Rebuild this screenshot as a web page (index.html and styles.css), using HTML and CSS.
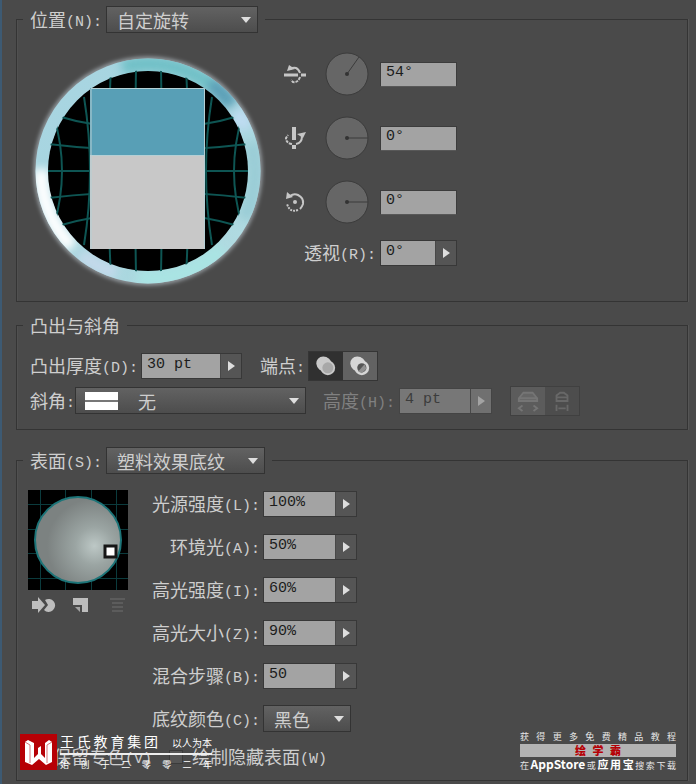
FILE: index.html
```html
<!DOCTYPE html>
<html lang="zh-CN">
<head>
<meta charset="utf-8">
<meta name="viewport" content="width=device-width, initial-scale=1">
<title>3D 凸出和斜角选项</title>
<link rel="stylesheet" href="styles.css">
</head>
<body>
<main class="dialog">

  <fieldset class="group group-position">
    <legend class="group-title">
      <label for="position">位置<span class="latin">(N):</span></label>
      <span class="dropdown dropdown-position"><select id="position"><option>自定旋转</option></select></span>
    </legend>
    <div class="rotation">
      <svg class="trackball" viewBox="0 0 236 236" aria-hidden="true">
        <defs>
          <linearGradient id="ring" x1="0" y1="0" x2="1" y2="1">
            <stop offset="0" stop-color="#a9d5e2"/>
            <stop offset=".5" stop-color="#a5d5de"/>
            <stop offset="1" stop-color="#b4dce2"/>
          </linearGradient>
          <filter id="soft" x="-10%" y="-10%" width="120%" height="120%"><feGaussianBlur stdDeviation="2"/></filter>
          <filter id="softer" x="-30%" y="-30%" width="160%" height="160%"><feGaussianBlur stdDeviation="5"/></filter>
          <clipPath id="ball"><circle cx="118" cy="118" r="101"/></clipPath>
          <mask id="band"><circle cx="118" cy="118" r="106" fill="none" stroke="#fff" stroke-width="13"/></mask>
        </defs>
        <circle cx="118" cy="118" r="112" fill="none" stroke="#a6aeb4" stroke-width="4" filter="url(#soft)"/>
        <circle cx="118" cy="118" r="106" fill="none" stroke="url(#ring)" stroke-width="13"/>
        <g mask="url(#band)" fill="none" stroke-width="16">
          <g filter="url(#softer)">
            <path d="M92 14A107 107 0 0 1 182 32" stroke="#6fc0c6"/>
            <path d="M180 30A107 107 0 0 1 202 52" stroke="#5a9fb6"/>
            <path d="M206 58A107 107 0 0 1 216 76" stroke="#bfdcf2"/>
            <path d="M11 116A107 107 0 0 0 42 194" stroke="#ffffff"/>
            <path d="M50 201A107 107 0 0 0 86 220" stroke="#c3d9ea"/>
            <path d="M108 225A107 107 0 0 0 192 196" stroke="#a9e4e3"/>
            <path d="M221 90A107 107 0 0 1 214 166" stroke="#9accd5"/>
          </g>
        </g>
        <circle cx="118" cy="118" r="100" fill="#000"/>
        <g clip-path="url(#ball)" fill="none" stroke="#0e5553" stroke-width="2">
          <path d="M18 118H218M18 91Q118 103 218 91M18 145Q118 133 218 145M20 61Q118 91 216 61M20 175Q118 145 216 175"/>
          <path d="M106 16Q104 118 106 220M131 16Q133 118 131 220M81 14Q75 118 81 222M156 14Q162 118 156 222M54 44Q66 118 54 192M182 44Q170 118 182 192M24 64Q40 118 24 172M212 64Q196 118 212 172"/>
        </g>
        <rect x="60" y="35" width="115" height="67" fill="#589fb6"/>
        <rect x="60" y="102" width="115" height="94" fill="#c8c8c8"/>
        <path d="M61 196V35.500H174.500V196M61 102.500H174" fill="none" stroke="#b5cfd4"/>
      </svg>
      <div class="axes">
        <div class="axis">
          <svg class="axis-icon" viewBox="0 0 24 24" aria-hidden="true"><g fill="none" stroke="#c6c6c6"><path d="M1 13h14M18 13h5" stroke-width="3"/><path d="M7 7q7-4 10 4" stroke-width="2"/><path d="M17 15q-2 6-7 5l-2-2" stroke-width="2" stroke-dasharray="3 1"/></g><path d="M4 9l2-6 6 4z" fill="#c6c6c6"/></svg>
          <svg class="dial" viewBox="0 0 46 46" aria-hidden="true"><circle cx="23" cy="23" r="21"/><path d="M23 23L35 6"/><circle class="hub" cx="23" cy="23" r="2"/></svg>
          <input class="field" type="text" value="54°" aria-label="绕 X 轴旋转">
        </div>
        <div class="axis">
          <svg class="axis-icon" viewBox="0 0 24 24" aria-hidden="true"><g fill="none" stroke="#c6c6c6"><path d="M11 1v13M11 19v4" stroke-width="4"/><path d="M9 18q-6-1-6-6l2-3" stroke-width="2" stroke-dasharray="3 1"/><path d="M13 18q6-1 6-8" stroke-width="2"/></g><path d="M14 8l9-2-3 6z" fill="#c6c6c6"/></svg>
          <svg class="dial" viewBox="0 0 46 46" aria-hidden="true"><circle cx="23" cy="23" r="21"/><path d="M23 23H44"/><circle class="hub" cx="23" cy="23" r="2"/></svg>
          <input class="field" type="text" value="0°" aria-label="绕 Y 轴旋转">
        </div>
        <div class="axis">
          <svg class="axis-icon" viewBox="0 0 24 24" aria-hidden="true"><g fill="none" stroke="#c6c6c6" stroke-width="2"><path d="M7 6q4-3 8-1 6 3 5 9-1 3-3 5"/><path d="M15 20q-8 3-11-6" stroke-dasharray="2 1"/></g><path d="M3 9l1-7 6 5z" fill="#c6c6c6"/><circle cx="12" cy="12" r="2" fill="#c6c6c6"/></svg>
          <svg class="dial" viewBox="0 0 46 46" aria-hidden="true"><circle cx="23" cy="23" r="21"/><path d="M23 23H44"/><circle class="hub" cx="23" cy="23" r="2"/></svg>
          <input class="field" type="text" value="0°" aria-label="绕 Z 轴旋转">
        </div>
        <div class="perspective">
          <label for="perspective">透视<span class="latin">(R):</span></label>
          <span class="stepper"><input class="field" id="perspective" type="text" value="0°"><button class="step" type="button" aria-label="透视滑块"></button></span>
        </div>
      </div>
    </div>
  </fieldset>

  <fieldset class="group group-extrude">
    <legend class="group-title">凸出与斜角</legend>
    <div class="row">
      <label for="depth">凸出厚度<span class="latin">(D):</span></label>
      <span class="stepper stepper-depth"><input class="field" id="depth" type="text" value="30 pt"><button class="step" type="button" aria-label="凸出厚度滑块"></button></span>
      <span class="cap-label">端点<span class="latin">:</span></span>
      <span class="toggle">
        <button class="toggle-item is-on" type="button" aria-label="开启端点"><svg viewBox="0 0 24 24" aria-hidden="true"><ellipse cx="10" cy="10" rx="9" ry="8" transform="rotate(42 10 10)" fill="#c9c9c9"/><circle cx="14" cy="14" r="8" fill="#c9c9c9"/><circle cx="14" cy="14" r="6" fill="#a8a8a8"/></svg></button>
        <button class="toggle-item" type="button" aria-label="关闭端点"><svg viewBox="0 0 24 24" aria-hidden="true"><ellipse cx="10" cy="10" rx="9" ry="8" transform="rotate(42 10 10)" fill="#d6d6d6"/><circle cx="14" cy="14" r="8" fill="#d6d6d6"/><circle cx="14" cy="14" r="5" fill="#555"/><path d="M10 18l7-8 2 5-5 5z" fill="#919191"/></svg></button>
      </span>
    </div>
    <div class="row">
      <label for="bevel">斜角<span class="latin">:</span></label>
      <span class="dropdown dropdown-bevel"><select id="bevel"><option>无</option></select><span class="swatch"></span></span>
      <label class="dim height-label" for="height">高度<span class="latin">(H):</span></label>
      <span class="stepper stepper-height is-off"><input class="field" id="height" type="text" value="4 pt" disabled><button class="step" type="button" disabled aria-label="高度滑块"></button></span>
      <span class="toggle toggle-bevel">
        <button class="toggle-item" type="button" disabled aria-label="斜角外扩"><svg viewBox="0 0 24 24" aria-hidden="true"><g fill="#666" stroke="#757575" stroke-width="2"><path d="M2 12V9l5-6h10l5 6v3zM3 9h18"/><path d="M6 17l-4 3 4 3M18 17l4 3-4 3" fill="none"/></g></svg></button>
        <button class="toggle-item" type="button" disabled aria-label="斜角内缩"><svg viewBox="0 0 24 24" aria-hidden="true"><g fill="none" stroke="#686868" stroke-width="2"><path d="M6 12V6l4-3h4l4 3v6zM6 8h12"/><path d="M6 16v7M18 16v7M8 20h8"/></g></svg></button>
      </span>
    </div>
  </fieldset>

  <fieldset class="group group-surface">
    <legend class="group-title">
      <label for="surface">表面<span class="latin">(S):</span></label>
      <span class="dropdown dropdown-surface"><select id="surface"><option>塑料效果底纹</option></select></span>
    </legend>
    <div class="surface">
      <div class="lighting">
        <svg class="sphere" viewBox="0 0 100 100" aria-hidden="true">
          <defs>
            <radialGradient id="shade" cx=".69" cy=".57" r=".55">
              <stop offset="0" stop-color="#bdc8c6"/>
              <stop offset=".4" stop-color="#9ba5a3"/>
              <stop offset="1" stop-color="#7c8281"/>
            </radialGradient>
          </defs>
          <rect width="100" height="100" fill="#000"/>
          <path d="M12.500 0v100M37.500 0v100M63.500 0v100M88.500 0v100M0 14.500h100M0 39.500h100M0 63.500h100M0 88.500h100" stroke="#0b3b3d"/>
          <circle cx="50" cy="50" r="43" fill="url(#shade)" stroke="#1c7478" stroke-width="2"/>
          <rect x="77" y="56" width="11" height="11" fill="#fff" stroke="#161616" stroke-width="3"/>
        </svg>
        <div class="light-tools">
          <button type="button" aria-label="将所选光源移到对象后面"><svg viewBox="0 0 24 18" aria-hidden="true"><path d="M0 5h6V1l7 8-7 8v-4H0z" fill="#bdbdbd"/><path d="M13 4a6.500 6.500 0 1 1-1 10l4-5z" fill="#bdbdbd"/></svg></button>
          <button type="button" aria-label="新建光源"><svg viewBox="0 0 24 18" aria-hidden="true"><path d="M4 2h15v14h-6V9H4z" fill="#bdbdbd"/><path d="M6 11h5v5z" fill="#a3a3a3"/></svg></button>
          <button type="button" disabled aria-label="删除光源"><svg viewBox="0 0 24 18" aria-hidden="true"><path d="M4 3h15M6 7h11M6 11h11M6 15h11" stroke="#5c5c5c" stroke-width="2"/></svg></button>
        </div>
      </div>
      <div class="settings">
        <label for="intensity">光源强度<span class="latin">(L):</span></label>
        <span class="stepper"><input class="field" id="intensity" type="text" value="100%"><button class="step" type="button" aria-label="光源强度滑块"></button></span>
        <label for="ambient">环境光<span class="latin">(A):</span></label>
        <span class="stepper"><input class="field" id="ambient" type="text" value="50%"><button class="step" type="button" aria-label="环境光滑块"></button></span>
        <label for="highlight">高光强度<span class="latin">(I):</span></label>
        <span class="stepper"><input class="field" id="highlight" type="text" value="60%"><button class="step" type="button" aria-label="高光强度滑块"></button></span>
        <label for="size">高光大小<span class="latin">(Z):</span></label>
        <span class="stepper"><input class="field" id="size" type="text" value="90%"><button class="step" type="button" aria-label="高光大小滑块"></button></span>
        <label for="blend">混合步骤<span class="latin">(B):</span></label>
        <span class="stepper"><input class="field" id="blend" type="text" value="50"><button class="step" type="button" aria-label="混合步骤滑块"></button></span>
        <label for="shading">底纹颜色<span class="latin">(C):</span></label>
        <span class="dropdown dropdown-shading"><select id="shading"><option>黑色</option></select></span>
      </div>
    </div>
    <div class="checks">
      <label class="check"><input type="checkbox"><span>保留专色<span class="latin">(V)</span></span></label>
      <label class="check"><input type="checkbox"><span>绘制隐藏表面<span class="latin">(W)</span></span></label>
    </div>
  </fieldset>

  <div class="brand">
    <svg class="brand-logo" viewBox="0 0 37 36" aria-hidden="true">
      <rect width="37" height="36" fill="#b60005"/>
      <path d="M5 8l3-2 6 3v15l4-4v-6l3-2v8l4 4V9l4-3 3 2v20l-6 3-7-6-7 6-7-3z" fill="#fff"/>
      <path d="M5 8l5 3v18M32 8l-5 3v18" fill="none" stroke="#d8777a"/>
    </svg>
    <div class="brand-text">
      <div class="brand-head"><span class="brand-name">王氏教育集团</span><span class="brand-motto">以人为本</span></div>
      <div class="brand-since">始创于二零零二年</div>
    </div>
  </div>

  <div class="promo">
    <div class="promo-line">获得更多免费精品教程</div>
    <div class="promo-band">绘学霸</div>
    <div class="promo-line promo-stores">在<b class="store">AppStore</b>或<b>应用宝</b>搜索下载</div>
  </div>
</main>
</body>
</html>
```
FILE: styles.css
```css
* { box-sizing: border-box; }

body {
  margin: 0;
  background: #4a4a4a;
  color: #cecece;
  font: 18px/26px "Noto Sans CJK SC", sans-serif;
}

button, input, select { font: inherit; color: inherit; margin: 0; }
svg { display: block; }

.latin {
  font-family: "Liberation Mono", monospace;
  font-size: 15px;
  line-height: 20px;
  vertical-align: 1px;
}

.dialog {
  position: relative;
  min-height: 100vh;
  padding: 6px 8px 3px 14px;
  border-left: 2px solid #3d5a73;
  overflow: hidden;
}

/* Groups */
.group {
  min-width: 0;
  margin: 0;
  padding: 0 13px;
  border: 1px solid #343434;
  box-shadow: 1px 0 #555, inset 1px 0 #505050;
}
.group-position { padding-bottom: 12px; }
.group-extrude { margin-top: 10px; padding-bottom: 11px; }
.group-surface { margin-top: 17px; padding-bottom: 10px; }

.group-title {
  display: flex;
  gap: 4px;
  margin-left: -7px;
  padding: 0 7px;
}

/* Drop-downs */
.dropdown {
  position: relative;
  display: inline-flex;
  height: 27px;
}
.dropdown::after {
  content: "";
  position: absolute;
  right: 7px;
  top: 11px;
  border: 5px solid transparent;
  border-top: 6px solid #dedede;
  border-bottom: 0;
  pointer-events: none;
}
.dropdown select {
  appearance: none;
  width: 100%;
  padding: 0 20px 0 10px;
  border: 1px solid #333;
  border-radius: 0;
  background: linear-gradient(#626262, #4d4d4d);
}
.dropdown-position { width: 152px; }
.dropdown-surface { width: 159px; }
.dropdown-bevel { width: 231px; }
.dropdown-bevel select { padding-left: 62px; }
.dropdown-shading { width: 88px; }

.swatch {
  position: absolute;
  left: 10px;
  top: 5px;
  width: 33px;
  height: 18px;
  background: linear-gradient(#fff 8px, #777 8px 10px, #fff 10px);
  pointer-events: none;
}

/* Fields */
.field {
  width: 77px;
  height: 25px;
  padding: 0 4px 3px 5px;
  border: 1px solid #3c3c3c;
  border-bottom-color: #585858;
  border-radius: 0;
  background: #a3a3a3;
  color: #1c1c1c;
  font-family: "Liberation Mono", monospace;
  font-size: 15px;
}
.stepper {
  display: inline-flex;
  width: 94px;
  height: 26px;
  border: 1px solid #383838;
}
.stepper .field {
  flex: 1;
  min-width: 0;
  height: 100%;
  border: 0;
}
.step {
  display: flex;
  align-items: center;
  justify-content: center;
  flex: 0 0 21px;
  padding: 0;
  border: 0;
  border-left: 1px solid #484848;
  background: #555;
}
.step::before {
  content: "";
  border: 5px solid transparent;
  border-left: 7px solid #dedede;
  border-right: 0;
}
.stepper-depth { width: 101px; }
.stepper-height { width: 93px; }
.is-off { border-color: #444; }
.is-off .field { background: #777; color: #3c3c3c; }
.is-off .step { background: #707070; }
.is-off .step::before { border-left-color: #a3a3a3; }

/* Rotation */
.rotation {
  display: flex;
  gap: 17px;
  padding-top: 20px;
}
.trackball { flex: none; width: 236px; height: 236px; }
.axes {
  display: flex;
  flex-direction: column;
  gap: 18px;
  margin-top: -2px;
}
.axis {
  display: flex;
  align-items: center;
  gap: 17px;
}
.axis-icon { width: 24px; height: 24px; }
.dial {
  width: 46px;
  height: 46px;
  fill: #666;
  stroke: #3b3b3b;
  stroke-width: 1;
}
.dial .hub { fill: #333; stroke: none; }
.axis .field { margin-left: -7px; }
.perspective {
  display: flex;
  justify-content: flex-end;
  align-items: center;
  gap: 4px;
  margin-top: -4px;
}
.perspective .stepper { width: 77px; }

/* Extrude and bevel */
.row {
  display: flex;
  align-items: center;
  height: 35px;
}
.group-extrude .row:first-of-type { margin-top: 10px; }
.row .stepper-depth { margin-left: 3px; }
.cap-label { margin: 0 3px 0 18px; }
.height-label { margin: 0 4px 0 17px; }
.dim { color: #808080; }
.toggle {
  display: inline-flex;
  height: 30px;
  border: 1px solid #353535;
}
.toggle-item {
  display: flex;
  align-items: center;
  justify-content: center;
  width: 34px;
  padding: 0;
  border: 0;
  background: #626262;
}
.toggle-item svg { width: 22px; height: 22px; }
.is-on { background: #303030; }
.toggle-bevel { margin-left: 18px; border-color: #404040; }
.toggle-bevel .toggle-item { background: #5c5c5c; }
.toggle-bevel .toggle-item + .toggle-item { background: #4d4d4d; }

/* Surface */
.surface {
  display: flex;
  gap: 22px;
  padding-top: 16px;
  margin-left: -2px;
}
.sphere { width: 100px; height: 100px; }
.light-tools {
  display: flex;
  gap: 13px;
  padding: 6px 0 0 4px;
}
.light-tools button {
  width: 24px;
  padding: 0;
  border: 0;
  background: none;
}
.light-tools svg { width: 24px; height: 18px; }
.settings {
  display: grid;
  grid-template-columns: auto auto;
  grid-auto-rows: 27px;
  align-items: center;
  row-gap: 16px;
  column-gap: 3px;
}
.settings label { text-align: right; }

.checks {
  display: flex;
  gap: 17px;
  margin-top: 11px;
}
.check { display: flex; align-items: center; }
.check input {
  appearance: none;
  width: 14px;
  height: 14px;
  margin-right: 9px;
  border: 1px solid #3b3b3b;
  background: #555;
}

/* Overlaid marks */
.brand {
  position: absolute;
  left: 18px;
  bottom: 14px;
  display: flex;
  gap: 3px;
  color: #fff;
}
.brand-logo { width: 37px; height: 36px; }
.brand-text { width: 152px; }
.brand-head {
  display: flex;
  justify-content: space-between;
  height: 21px;
  border-bottom: 2px solid #eee;
}
.brand-name {
  width: 98px;
  font-size: 14px;
  line-height: 14px;
  text-align-last: justify;
}
.brand-motto { font-size: 10px; line-height: 18px; }
.brand-since {
  font-size: 9px;
  line-height: 20px;
  text-align-last: justify;
  height: 15px;
}

.promo {
  position: absolute;
  right: 20px;
  bottom: 11px;
  width: 156px;
  color: #e6e6e6;
}
.promo-line {
  font-size: 9px;
  line-height: 14px;
  text-align-last: justify;
}
.promo-band {
  padding: 0 55px;
  background: #b3b3b3;
  color: #b60005;
  font-size: 11px;
  font-weight: 900;
  line-height: 13px;
  text-align-last: justify;
}
.promo-stores { white-space: nowrap; }
.promo-stores b { font-size: 11px; line-height: 14px; color: #fff; }
.promo-stores .store { font-size: 12px; }
```
